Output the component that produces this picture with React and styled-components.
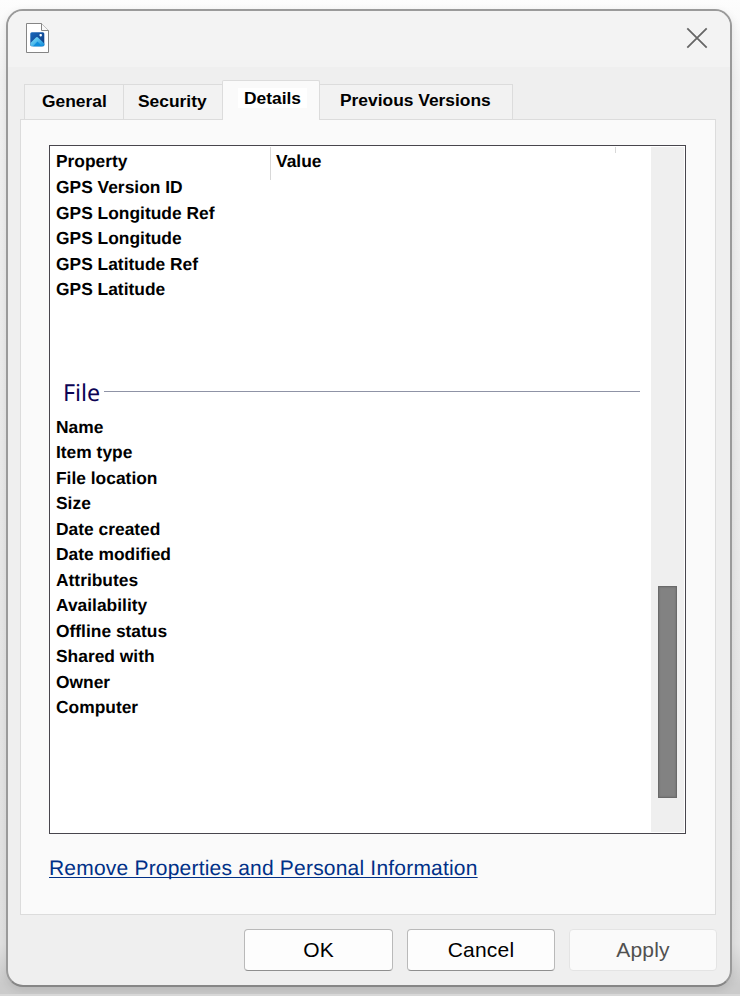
import React from "react";
import styled, { createGlobalStyle, css } from "styled-components";

const Global = createGlobalStyle`
  *, *::before, *::after { box-sizing: border-box; }
  body { margin: 0; font-family: "Liberation Sans", Arial, sans-serif; color: #000; text-rendering: geometricPrecision; }
`;

const Desktop = styled.div`
  width: 740px;
  height: 996px;
  padding: 9px 8px 7px 6px;
  overflow: hidden;
  border-bottom: 2px solid #d8d8d8;
  background: linear-gradient(#fdfdfd 0, #f3f3f3 8%, #ececec 40%, #e2e2e2 95%, #cbcbcb 99%);
`;

const Dialog = styled.main`
  display: flex;
  flex-direction: column;
  width: 726px;
  height: 978px;
  border: 2px solid #9a9a9a;
  border-bottom-color: #868686;
  border-radius: 17px;
  background: #efefef;
  overflow: hidden;
  box-shadow: 0 3px 10px rgba(0, 0, 0, 0.1);
`;

const TitleBar = styled.header`
  display: flex;
  justify-content: space-between;
  align-items: flex-start;
  height: 56px;
  flex: none;
  padding: 12px 22px 0 18px;
  background: #f3f3f3;
`;

const CloseButton = styled.button`
  display: flex;
  padding: 0;
  margin-top: 4px;
  border: 0;
  background: none;
`;

const Tabs = styled.nav`
  display: flex;
  align-items: flex-end;
  flex: none;
  height: 53px;
  padding-left: 16px;
  margin-bottom: -1px;
`;

const Tab = styled.button`
  width: ${(p) => p.$width}px;
  height: 36px;
  padding: ${(p) => p.$top}px 0 0 ${(p) => p.$left}px;
  border: 1px solid #dcdcdc;
  border-right-width: ${(p) => (p.$last ? 1 : 0)}px;
  background: #f2f2f2;
  color: #000;
  font: bold 17.4px/20px "Liberation Sans", Arial, sans-serif;
  text-align: left;
  white-space: nowrap;
  display: flex;
  align-items: flex-start;
  ${(p) =>
    p.$active &&
    css`
      height: 40px;
      margin-right: -1px;
      border-right-width: 1px;
      border-bottom: 0;
      border-radius: 2px 2px 0 0;
      background: #fafafa;
      z-index: 1;
    `}
`;

const TabHighlight = styled.span`
  padding: 0 6px;
  margin-left: -6px;
  background: #fff;
`;

const Panel = styled.section`
  width: 696px;
  height: 796px;
  flex: none;
  margin-left: 12px;
  padding: 25px 29px 0 28px;
  border: 1px solid #dcdcdc;
  background: #fafafa;
`;

const ListBox = styled.div`
  display: flex;
  width: 637px;
  height: 689px;
  border: 1px solid #48464d;
  background: #fff;
`;

const Content = styled.div`
  width: 601px;
  padding-top: 1px;
`;

const HeaderRow = styled.div`
  display: flex;
  height: 27px;
`;

const HeaderCell = styled.div`
  width: ${(p) => p.$width}px;
  height: ${(p) => p.$height}px;
  padding-left: ${(p) => p.$left}px;
  border-right: 1px solid #d8d8d8;
  font-weight: bold;
  font-size: 17.4px;
  line-height: 29px;
  flex: none;
`;

const Rows = styled.ul`
  margin: 0;
  padding: 0;
  list-style: none;
`;

const Row = styled.li`
  height: 25.5px;
  padding-left: 6px;
  font-weight: bold;
  font-size: 17.4px;
  line-height: 27px;
`;

const GroupHeading = styled.h2`
  display: flex;
  align-items: flex-start;
  gap: 4px;
  height: 37px;
  margin: 75px 11px 0 13px;
  font: 400 23.3px/30px "Noto Sans", "Open Sans", sans-serif;
  color: #0c0454;

  &::after {
    content: "";
    flex: 1;
    height: 1px;
    margin-top: 14.5px;
    background: #8f93a6;
  }
`;

const Track = styled.div`
  width: 33px;
  height: 685px;
  margin-top: 1px;
  padding: 439px 7px 0;
  background: #efefef;
`;

const Thumb = styled.div`
  height: 212px;
  border: 1px solid #6a6a6a;
  background: #828282;
  box-shadow: inset 0 0 2px #666;
`;

const PropertiesLink = styled.a`
  display: inline-block;
  margin-top: 23px;
  font-size: 21px;
  line-height: 24px;
  letter-spacing: 0.2px;
  white-space: nowrap;
  color: #003087;
  text-decoration: underline;
  text-decoration-thickness: 1px;
  text-underline-offset: 2px;
  text-decoration-skip-ink: none;
`;

const Footer = styled.footer`
  display: flex;
  justify-content: flex-end;
  gap: 14px;
  padding: 14px 13px 0 0;
`;

const Button = styled.button`
  width: ${(p) => p.$width || 148}px;
  height: 42px;
  padding: 0;
  border: 1px solid #b9b9b9;
  border-bottom-color: #8f8f8f;
  border-radius: 4px;
  background: #fdfdfd;
  font: 21px "Liberation Sans", Arial, sans-serif;
  letter-spacing: 0.2px;
  color: #000;

  &:disabled {
    border-color: #e4e4e4;
    background: #fafafa;
    color: #505050;
  }
`;

const FileIcon = () => (
  <svg width="24" height="32" viewBox="0 0 24 32">
    <defs>
      <linearGradient id="sky" x1="0" y1="0" x2="1" y2="1">
        <stop offset="0" stopColor="#1768bd" />
        <stop offset="1" stopColor="#10387c" />
      </linearGradient>
      <linearGradient id="hill" x1="0" y1="0" x2="1" y2="1">
        <stop offset="0" stopColor="#8eeaff" />
        <stop offset="1" stopColor="#0c86d6" />
      </linearGradient>
    </defs>
    <path d="M.5.5H15.5L22.5 7.5V29.5H.5Z" fill="#fff" stroke="#858585" />
    <path d="M15.5.5V7.5H22.5" fill="#f8f8f8" stroke="#858585" />
    <rect x="4.3" y="9.3" width="14" height="14" rx="1.5" fill="url(#sky)" />
    <path d="M4.5 20 10 14.5Q11 13.6 12 14.5L18.3 20.5V22Q18.3 23.3 17 23.3H6Q4.6 23.3 4.5 22Z" fill="url(#hill)" />
    <path d="M11.5 18.6 16 23.3H7Z" fill="#0f8fdd" />
    <rect x="13.5" y="11" width="2.4" height="2.4" rx=".8" fill="#fff" />
  </svg>
);

const CloseIcon = () => (
  <svg width="22" height="22" viewBox="0 0 22 22">
    <path d="M1.3 1.3 20.7 20.7M20.7 1.3 1.3 20.7" fill="none" stroke="#666" strokeWidth="1.8" />
  </svg>
);

const gpsProperties = ["GPS Version ID", "GPS Longitude Ref", "GPS Longitude", "GPS Latitude Ref", "GPS Latitude"];
const fileProperties = [
  "Name", "Item type", "File location", "Size", "Date created", "Date modified",
  "Attributes", "Availability", "Offline status", "Shared with", "Owner", "Computer",
];

export default function App() {
  return (
    <Desktop>
      <Global />
      <Dialog>
        <TitleBar>
          <FileIcon />
          <CloseButton aria-label="Close"><CloseIcon /></CloseButton>
        </TitleBar>
        <Tabs>
          <Tab $width={99} $left={17} $top={6}>General</Tab>
          <Tab $width={99} $left={14} $top={6}>Security</Tab>
          <Tab $width={98} $left={21} $top={7} $active><TabHighlight>Details</TabHighlight></Tab>
          <Tab $width={194} $left={20} $top={5} $last>Previous Versions</Tab>
        </Tabs>
        <Panel>
          <ListBox>
            <Content>
              <HeaderRow>
                <HeaderCell $width={221} $height={33} $left={6}>Property</HeaderCell>
                <HeaderCell $width={345} $height={6} $left={5}>Value</HeaderCell>
              </HeaderRow>
              <Rows>{gpsProperties.map((p) => <Row key={p}>{p}</Row>)}</Rows>
              <GroupHeading>File</GroupHeading>
              <Rows>{fileProperties.map((p) => <Row key={p}>{p}</Row>)}</Rows>
            </Content>
            <Track><Thumb /></Track>
          </ListBox>
          <PropertiesLink>Remove Properties and Personal Information</PropertiesLink>
        </Panel>
        <Footer>
          <Button $width={149}>OK</Button>
          <Button>Cancel</Button>
          <Button disabled>Apply</Button>
        </Footer>
      </Dialog>
    </Desktop>
  );
}
